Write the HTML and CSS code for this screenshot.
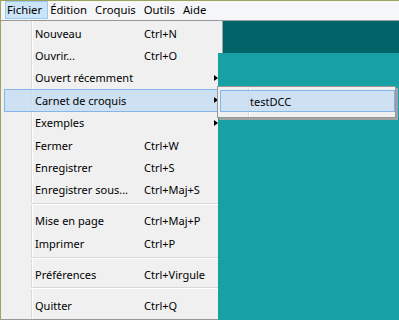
FILE: index.html
```html
<!DOCTYPE html>
<html lang="fr">
<head>
<meta charset="utf-8">
<title>Fichier</title>
<link rel="stylesheet" href="styles.css">
</head>
<body>
<div class="window">
  <div class="menubar">
    <span class="mb-item active">Fichier</span>
    <span class="mb-item">Édition</span>
    <span class="mb-item">Croquis</span>
    <span class="mb-item">Outils</span>
    <span class="mb-item">Aide</span>
  </div>
  <div class="workspace">
    <div class="toolbar">
      <div class="tb-left"></div>
      <div class="tb-main"></div>
    </div>
    <div class="editor"></div>
  </div>

  <div class="menu">
    <div class="item"><span class="label">Nouveau</span><span class="key">Ctrl+N</span><span></span></div>
    <div class="item"><span class="label">Ouvrir...</span><span class="key">Ctrl+O</span><span></span></div>
    <div class="item"><span class="label">Ouvert récemment</span><span class="key"></span><span class="arrow"></span></div>
    <div class="item selected"><span class="label">Carnet de croquis</span><span class="key"></span><span class="arrow"></span></div>
    <div class="item"><span class="label">Exemples</span><span class="key"></span><span class="arrow"></span></div>
    <div class="item"><span class="label">Fermer</span><span class="key">Ctrl+W</span><span></span></div>
    <div class="item"><span class="label">Enregistrer</span><span class="key">Ctrl+S</span><span></span></div>
    <div class="item"><span class="label">Enregistrer sous...</span><span class="key">Ctrl+Maj+S</span><span></span></div>
    <div class="sep"></div>
    <div class="item"><span class="label">Mise en page</span><span class="key">Ctrl+Maj+P</span><span></span></div>
    <div class="item"><span class="label">Imprimer</span><span class="key">Ctrl+P</span><span></span></div>
    <div class="sep"></div>
    <div class="item"><span class="label">Préférences</span><span class="key">Ctrl+Virgule</span><span></span></div>
    <div class="sep"></div>
    <div class="item"><span class="label">Quitter</span><span class="key">Ctrl+Q</span><span></span></div>
  </div>

  <div class="submenu">
    <div class="sub-item selected"><span class="label">testDCC</span></div>
  </div>
</div>
</body>
</html>
```
FILE: styles.css
```css
* { box-sizing: border-box; }
html, body { margin: 0; padding: 0; }
body {
  width: 399px;
  height: 320px;
  overflow: hidden;
  font-family: "Noto Sans", "Open Sans", sans-serif;
  font-size: 11px;
  color: #000;
  background: #17a1a5;
}
.window {
  position: relative;
  width: 399px;
  height: 320px;
  border-left: 1px solid #9ea25f;
  border-top: 1px solid #9ea25f;
  display: flex;
  flex-direction: column;
}
.menubar {
  height: 20px;
  background: #f5f6f7;
  border-bottom: 1px solid #a0a0a0;
  display: flex;
  align-items: stretch;
  padding-left: 4px;
  font-size: 11.3px;
}
.mb-item {
  display: flex;
  align-items: center;
  padding: 0 5px 0 1px;
  border: 1px solid transparent;
  height: 18px;
  line-height: 16px;
}
.mb-item.active {
  background: #cce4f7;
  border-color: #99c9ef;
}
.workspace {
  flex: 1;
  display: flex;
  flex-direction: column;
}
.toolbar {
  height: 32px;
  display: flex;
}
.tb-left {
  width: 222px;
  background: #f0f0f0;
  border-right: 1px solid #a0a0a0;
}
.tb-main {
  flex: 1;
  background: #006468;
}
.editor {
  flex: 1;
  background: #17a1a5;
}

/* dropdown menu */
.menu {
  position: absolute;
  left: 0;
  top: 19px;
  width: 217px;
  height: 300px;
  background-color: #f0f0f0;
  background-image: linear-gradient(to right, transparent 30px, #dadada 30px, #dadada 31px, #ffffff 31px, #ffffff 32px, transparent 32px);
  border-top: 1px solid #979797;
  border-bottom: 1px solid #979797;
  padding: 1px 0 0 3px;
}
.item {
  height: 22.4px;
  display: grid;
  grid-template-columns: 109px 1fr 4px;
  align-items: center;
  padding-left: 30px;
  padding-right: 0;
  margin-right: -1px;
  border: 1px solid transparent;
  white-space: nowrap;
}
.item.selected {
  background: rgba(200, 222, 243, 0.85);
  border-color: #84b5ea;
}
.arrow {
  width: 0;
  height: 0;
  border-top: 3.5px solid transparent;
  border-bottom: 3.5px solid transparent;
  border-left: 4px solid #000;
  justify-self: end;
}
.sep {
  height: 8.6px;
  margin-left: 27px;
  padding-top: 2px;
}
.sep::before {
  content: "";
  display: block;
  height: 1px;
  background: #d7d7d7;
  border-bottom: 1px solid #ffffff;
  box-sizing: content-box;
}

/* submenu */
.submenu {
  position: absolute;
  left: 216px;
  top: 85px;
  width: 179px;
  height: 32px;
  background-color: #f0f0f0;
  background-image: linear-gradient(to right, transparent 30px, #dadada 30px, #dadada 31px, #ffffff 31px, #ffffff 32px, transparent 32px);
  border: 1px solid #979797;
  box-shadow: 2px 2px 0 #a2a2a2;
  padding: 3px 0 5px 2px;
}
.sub-item {
  height: 22px;
  display: flex;
  align-items: center;
  padding-left: 29px;
  border: 1px solid transparent;
}
.sub-item.selected {
  background: rgba(200, 222, 243, 0.85);
  border-color: #84b5ea;
}
```
